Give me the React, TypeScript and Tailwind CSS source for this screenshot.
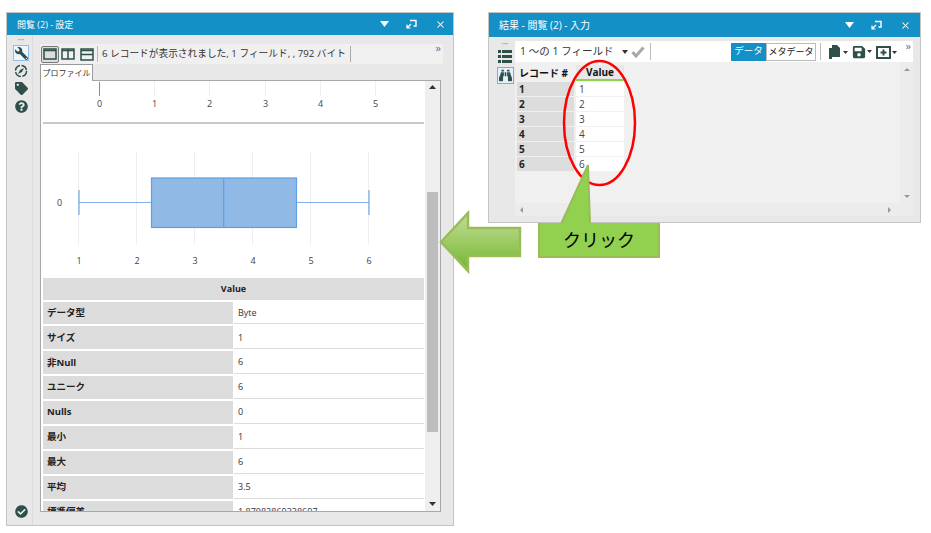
import { X } from "lucide-react";
import { FaBinoculars, FaCheckCircle, FaQuestionCircle, FaSave, FaTag, FaWrench } from "react-icons/fa";

const font = "font-['Open_Sans','Noto_Sans_CJK_JP',sans-serif]";

const profileRows = [
    ["データ型", "Byte"],
    ["サイズ", "1"],
    ["非Null", "6"],
    ["ユニーク", "6"],
    ["Nulls", "0"],
    ["最小", "1"],
    ["最大", "6"],
    ["平均", "3.5"],
    ["標準偏差", "1.87082869338697"],
];

const TitleBar = ({ title, className }: { title: string; className: string }) => (
    <div className={`flex items-center bg-[#1390c6] pl-[10px] text-white ${className}`}>
        <span className="flex-1 leading-none">{title}</span>
        <svg width="9" height="6" viewBox="0 0 9 6" className="mr-[17px]">
            <path d="M0 0h9L4.5 6z" fill="#fff" />
        </svg>
        <svg width="11" height="10" viewBox="0 0 11 10" fill="none" stroke="#fff" className="mr-[18px]">
            <path d="M4 1.5h6v5.5H7.5" strokeWidth="1.4" />
            <path d="M1 9l4-4M1 5.5V9h3.5" strokeWidth="1.2" />
        </svg>
        <X size={11} strokeWidth={2.2} />
    </div>
);

const LeftRail = () => (
    <div className="flex w-[26px] shrink-0 flex-col items-center border-r border-[#dcdcdc] pl-[3px] text-[#2f4f4b]">
        <div className="mt-[2px] h-[5px] text-[6px] leading-none text-[#999]">•••</div>
        <div className="mt-[3px] flex h-[16px] w-[16px] items-center justify-center border border-[#8cc0ea] bg-[#eef6fc]">
            <FaWrench size={13} className="-scale-x-100" />
        </div>
        <svg width="14" height="14" viewBox="0 0 14 14" className="mt-[3px]">
            <circle cx="7" cy="7" r="5.500" fill="none" stroke="#2f4f4b" strokeWidth="1.500" strokeDasharray="7 1.600" />
            <path d="M10 4L6 6 4 10l4-2z" fill="#2f4f4b" />
        </svg>
        <FaTag size={13} className="mt-[4px]" />
        <FaQuestionCircle size={13} className="mt-[5px]" />
        <FaCheckCircle size={13} className="mb-[7px] mt-auto" />
    </div>
);

const LayoutIcons = () => (
    <div className="flex h-full items-center">
        <div className="flex h-[17px] w-[18px] items-center justify-center rounded-[2px] border border-[#777] bg-[#ddd]">
            <svg width="14" height="12" viewBox="0 0 14 12" fill="none" stroke="#2f4f4b" strokeWidth="1.500">
                <rect x="1" y="1" width="12" height="10" />
                <path d="M1 2.500h12" />
            </svg>
        </div>
        <svg width="14" height="12" viewBox="0 0 14 12" fill="none" stroke="#2f4f4b" strokeWidth="1.500" className="ml-[2px]">
            <rect x="1" y="1" width="12" height="10" />
            <path d="M7 1v10M1 2.500h12" />
        </svg>
        <svg width="14" height="13" viewBox="0 0 14 13" fill="none" stroke="#2f4f4b" strokeWidth="1.500" className="ml-[5px]">
            <rect x="1" y="1" width="12" height="11" />
            <path d="M1 6.500h12M1 2.500h12" />
        </svg>
    </div>
);

const TopAxis = () => (
    <svg width="383" height="43" viewBox="0 0 383 43" className="block shrink-0">
        {[56, 111, 166, 222, 277, 332].map((x, i) => (
            <g key={x}>
                <line x1={x + 0.5} x2={x + 0.5} y1="0" y2="15" stroke="#eeeeee" />
                <text x={x + 0.5} y="26" textAnchor="middle" fontSize="9" fill="#444">
                    {i}
                </text>
            </g>
        ))}
        <line x1="56.500" x2="56.500" y1="1" y2="15" stroke="#8a8a8a" />
        <line x1="0" x2="381" y1="42" y2="42" stroke="#c8c8c8" strokeWidth="2" />
    </svg>
);

const BoxPlot = () => (
    <svg width="383" height="154" viewBox="0 0 383 154" className="block shrink-0">
        {[36, 94, 152, 210, 268, 326].map((x, i) => (
            <g key={x}>
                <line x1={x - 0.5} x2={x - 0.5} y1="28" y2="121" stroke="#eeeeee" />
                <text x={x} y="140" textAnchor="middle" fontSize="9" fill="#444">
                    {i + 1}
                </text>
            </g>
        ))}
        <text x="16.500" y="82" textAnchor="middle" fontSize="9" fill="#444">
            0
        </text>
        <line x1="36" x2="326" y1="78.500" y2="78.500" stroke="#7fb0e6" strokeWidth="1.200" />
        <line x1="36" x2="36" y1="66" y2="91" stroke="#6ea6e6" strokeWidth="1.200" />
        <line x1="326" x2="326" y1="66" y2="91" stroke="#6ea6e6" strokeWidth="1.200" />
        <rect x="108.500" y="54" width="145" height="49.500" fill="#90b9e6" stroke="#5f9ee3" strokeWidth="1.200" />
        <line x1="180.700" x2="180.700" y1="54" y2="103.500" stroke="#5f9ee3" strokeWidth="1.200" />
    </svg>
);

const ProfileTable = () => (
    <div className="flex w-[381px] flex-col text-[9px] text-[#333]">
        <div className="flex h-[21.500px] items-center justify-center bg-[#dcdcdc] font-bold text-[#222]">Value</div>
        {profileRows.map(([label, value]) => (
            <div key={label} className="mt-[2px] flex h-[22.900px] shrink-0">
                <div className="flex w-[190px] items-center bg-[#dcdcdc] pl-[4px] text-[9.500px] font-bold text-[#222]">{label}</div>
                <div className="ml-[1px] flex flex-1 items-center border-b border-[#dcdcdc] pl-[4px]">{value}</div>
            </div>
        ))}
    </div>
);

const ScrollBar = () => (
    <div className="flex w-[15px] shrink-0 flex-col items-center bg-[#efefef]">
        <svg width="7" height="4" viewBox="0 0 7 4" className="mt-[4px]">
            <path d="M0 4h7L3.500 0z" fill="#333" />
        </svg>
        <div className="mt-[103px] h-[240px] w-[11px] bg-[#bdbdbd]" />
        <svg width="7" height="4" viewBox="0 0 7 4" className="mb-[5px] mt-auto">
            <path d="M0 0h7L3.500 4z" fill="#333" />
        </svg>
    </div>
);

const ConfigWindow = () => (
    <div className="absolute left-[6px] top-[12px] flex h-[514px] w-[448px] flex-col border border-[#c4c4c4] bg-[#e8e8e8]">
        <TitleBar title="閲覧 (2) - 設定" className="h-[22px] pr-[7px] text-[9px]" />
        <div className="flex min-h-0 flex-1">
            <LeftRail />
            <div className="flex min-w-0 flex-1 flex-col pb-[13px] pl-[7px] pr-[12px] pt-[9px]">
                <div className="relative flex h-[20px] w-[403px] shrink-0 items-center bg-[#f0f0f0] pl-[1px] text-[9.700px] text-[#333]">
                    <LayoutIcons />
                    <div className="ml-[3px] h-[16px] w-[1px] bg-[#bbb]" />
                    <span className="ml-[4px] whitespace-nowrap">6 レコードが表示されました, 1 フィールド, , 792 バイト</span>
                    <div className="ml-[4px] h-[16px] w-[1px] bg-[#aaa]" />
                    <span className="absolute right-[2px] top-[-2px] text-[11px] leading-none text-[#6a6aa8]">»</span>
                </div>
                <div className="z-10 -mb-[1px] flex h-[17px] w-[53px] shrink-0 items-center justify-center border border-b-0 border-[#9a9a9a] bg-white text-[8px] text-[#333]">
                    プロファイル
                </div>
                <div className="flex min-h-0 flex-1 border border-[#a8a8a8] bg-white pl-[2px]">
                    <div className="min-w-0 flex-1 overflow-hidden">
                        <TopAxis />
                        <BoxPlot />
                        <ProfileTable />
                    </div>
                    <ScrollBar />
                </div>
            </div>
        </div>
    </div>
);

const ResultToolbar = () => (
    <div className="relative flex h-[21px] items-center bg-white pl-[5px] text-[10.500px] text-[#333]">
        <span className="whitespace-nowrap">1 ～の 1 フィールド</span>
        <svg width="6" height="4" viewBox="0 0 6 4" className="ml-[9px]">
            <path d="M0 0h6L3 4z" fill="#333" />
        </svg>
        <svg width="14" height="12" viewBox="0 0 14 12" fill="none" stroke="#a8a8a8" strokeWidth="3" className="ml-[3px]">
            <path d="M1.500 6l3.500 4 7.500-8.500" />
        </svg>
        <div className="ml-[5px] h-[17px] w-[1px] bg-[#bbb]" />
        <div className="ml-auto flex h-[19px] items-center text-[9.500px]">
            <div className="flex h-[18px] w-[35px] items-center justify-center bg-[#1390c6] text-white">データ</div>
            <div className="flex h-[18px] w-[50px] items-center justify-center whitespace-nowrap border border-[#bbb] text-[9px] text-[#111]">メタデータ</div>
            <div className="ml-[4px] h-[17px] w-[1px] bg-[#bbb]" />
            <svg width="19" height="14" viewBox="0 0 19 14" className="ml-[8px]">
                <path d="M0 3h3V0h5l3 3v9H3v2H0z" fill="#2f4f4b" />
                <path d="M14 6h5l-2.500 3z" fill="#333" />
            </svg>
            <FaSave size={14} className="ml-[4px] text-[#2f4f4b]" />
            <svg width="5" height="3" viewBox="0 0 5 3" className="ml-[1px]">
                <path d="M0 0h5L2.500 3z" fill="#333" />
            </svg>
            <svg width="21" height="14" viewBox="0 0 21 14" className="ml-[4px] mr-[16px]">
                <rect x="1" y="2" width="13" height="11" fill="#fff" stroke="#2f4f4b" strokeWidth="2" />
                <path d="M7.500 4.500v6M4.500 7.500h6" stroke="#2f4f4b" strokeWidth="2" />
                <path d="M16 6h5l-2.500 3z" fill="#333" />
            </svg>
        </div>
        <span className="absolute right-[2px] top-[-1px] text-[11px] leading-none text-[#6a6aa8]">»</span>
    </div>
);

const ResultGrid = () => (
    <div className="flex-1 px-[2px] pt-[3px] text-[10px] text-[#222]">
        <div className="flex h-[16px] font-bold">
            <div className="flex w-[57px] items-center pl-[2px] text-[#111]">レコード #</div>
            <div className="ml-[2px] flex w-[48px] items-center justify-center border-b-2 border-[#92d050] bg-[#e8e8e8] text-[#111]">Value</div>
        </div>
        {[1, 2, 3, 4, 5, 6].map((n) => (
            <div key={n} className="mt-[1px] flex h-[14px]">
                <div className="flex w-[57px] items-center bg-[#dcdcdc] pl-[2px] font-bold">{n}</div>
                <div className="ml-[2px] flex w-[48px] items-center bg-white pl-[3px] text-[#444]">{n}</div>
            </div>
        ))}
    </div>
);

const ResultWindow = () => (
    <div className="absolute left-[488px] top-[12px] flex h-[211px] w-[433px] flex-col border border-[#c4c4c4] bg-[#e8e8e8]">
        <TitleBar title="結果 - 閲覧 (2) - 入力" className="h-[24px] pr-[9px] text-[10px]" />
        <div className="flex min-h-0 flex-1 pb-[6px] pr-[7px] pt-[4px]">
            <div className="flex w-[26px] shrink-0 flex-col items-center pl-[6px]">
                <div className="h-[5px] text-[6px] leading-none text-[#999]">•••</div>
                <svg width="14" height="13" viewBox="0 0 14 13" className="mt-[4px]" fill="#2f4f4b">
                    <path d="M0 0h3v3H0zM4 0h10v3H4zM0 5h3v3H0zM4 5h10v3H4zM0 10h3v3H0zM4 10h10v3H4z" />
                </svg>
                <div className="mt-[4px] flex h-[17px] w-[17px] shrink-0 items-center justify-center border border-[#6fb0e8] bg-[#e6f2fb]">
                    <FaBinoculars size={13} className="text-[#2f4f4b]" />
                </div>
            </div>
            <div className="flex min-w-0 flex-1 flex-col">
                <ResultToolbar />
                <div className="flex min-h-0 flex-1 flex-col bg-[#f0f0f0]">
                    <div className="flex min-h-0 flex-1">
                        <ResultGrid />
                        <div className="flex w-[13px] shrink-0 flex-col items-center bg-[#ececec]">
                            <svg width="6" height="3" viewBox="0 0 6 3" className="mt-[6px]">
                                <path d="M0 3h6L3 0z" fill="#999" />
                            </svg>
                            <svg width="6" height="3" viewBox="0 0 6 3" className="mb-[5px] mt-auto">
                                <path d="M0 0h6L3 3z" fill="#999" />
                            </svg>
                        </div>
                    </div>
                    <div className="flex h-[13px] shrink-0 items-center justify-between bg-[#ececec] pl-[5px] pr-[22px]">
                        <svg width="3" height="6" viewBox="0 0 3 6">
                            <path d="M3 0v6L0 3z" fill="#999" />
                        </svg>
                        <svg width="3" height="6" viewBox="0 0 3 6">
                            <path d="M0 0v6l3-3z" fill="#999" />
                        </svg>
                    </div>
                </div>
            </div>
        </div>
    </div>
);

const Annotations = () => (
    <>
        <svg width="931" height="533" viewBox="0 0 931 533" className="absolute left-0 top-0">
            <defs>
                <linearGradient id="arrowFill" x1="0" y1="0" x2="0" y2="1">
                    <stop offset="0" stopColor="#c3dc9e" />
                    <stop offset="0.5" stopColor="#9ccb63" />
                    <stop offset="1" stopColor="#72b52f" />
                </linearGradient>
            </defs>
            <ellipse cx="599.500" cy="123" rx="35.500" ry="62" fill="none" stroke="#ff0000" strokeWidth="2.500" />
            <path d="M441 242L468 213V228H520V256H468V271z" fill="url(#arrowFill)" stroke="#9bbb59" strokeWidth="2.500" />
            <path d="M588 165L561 224H590z" fill="#92d050" stroke="#9bbb59" strokeWidth="2" />
        </svg>
        <div className="absolute left-[538px] top-[223px] flex h-[35px] w-[122px] items-center justify-center border-2 border-t-0 border-[#9bbb59] bg-[#92d050] pt-[1px] text-[18px] leading-none text-black">
            クリック
        </div>
    </>
);

const App: React.FC = () => {
    return (
        <div className={`relative h-[533px] w-[931px] overflow-hidden bg-white ${font}`}>
            <ConfigWindow />
            <ResultWindow />
            <Annotations />
        </div>
    );
};
export default App;
